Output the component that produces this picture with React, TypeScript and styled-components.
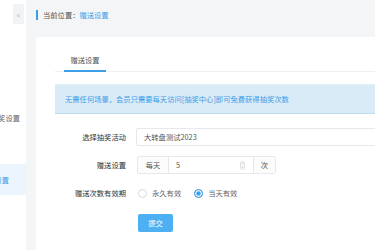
import React, { useState } from 'react';
import styled, { createGlobalStyle } from 'styled-components';

const GlobalStyle = createGlobalStyle`
  html, body {
    margin: 0;
    padding: 0;
    background: #f4f5f7;
    font-family: "Noto Sans CJK SC", "Noto Sans", sans-serif;
    font-size: 7.3px;
    color: #555;
  }
  * { box-sizing: border-box; }
`;

const menuItems = [
  { label: '转盘抽奖设置', top: 102, right: 6, active: false },
  { label: '签到设置', top: 0, right: 27, active: false },
  { label: '赠送设置', top: 0, right: 17, active: true },
];

const SpinnerIcon = () => (
  <svg width="5" height="9" viewBox="0 0 5 9">
    <rect x="0.5" y="0.5" width="4" height="8" rx="2" fill="none" stroke="#c9ccd1" strokeWidth="0.6" />
    <path d="M1.5 3.4 L2.5 2.3 L3.5 3.4 M1.5 5.6 L2.5 6.7 L3.5 5.6" fill="none" stroke="#9aa0a6" strokeWidth="0.6" />
  </svg>
);

export default function App() {
  const [validity, setValidity] = useState('today');
  const [count, setCount] = useState('5');

  return (
    <>
      <GlobalStyle />
      <Layout>
        <Sidebar>
          <CollapseButton>«</CollapseButton>
          {menuItems.map((item, i) => (
            <MenuItem key={i} $active={item.active} $top={item.top} $right={item.right}>
              <span>{item.label}</span>
            </MenuItem>
          ))}
        </Sidebar>

        <Main>
          <Breadcrumb>
            <BreadcrumbBar />
            <span>当前位置：</span>
            <BreadcrumbLink>赠送设置</BreadcrumbLink>
          </Breadcrumb>

          <Card>
            <Tabs>
              <Tab $active>赠送设置</Tab>
            </Tabs>

            <Alert>无需任何场景，会员只需要每天访问[抽奖中心]即可免费获得抽奖次数</Alert>

            <Form>
              <Row $gap={10}>
                <Label>选择抽奖活动</Label>
                <TextInput value="大转盘测试2023" readOnly />
              </Row>

              <Row $gap={10}>
                <Label>赠送设置</Label>
                <InputGroup>
                  <Addon $width={31}>每天</Addon>
                  <NumberBox>
                    <NumberField value={count} onChange={(e) => setCount(e.target.value)} />
                    <SpinnerIcon />
                  </NumberBox>
                  <Addon $width={22} $last>次</Addon>
                </InputGroup>
              </Row>

              <Row $gap={12}>
                <Label>赠送次数有效期</Label>
                <RadioGroup>
                  <RadioOption onClick={() => setValidity('forever')}>
                    <RadioCircle $checked={validity === 'forever'} />
                    <span>永久有效</span>
                  </RadioOption>
                  <RadioOption onClick={() => setValidity('today')}>
                    <RadioCircle $checked={validity === 'today'} />
                    <span>当天有效</span>
                  </RadioOption>
                </RadioGroup>
              </Row>

              <Row $gap={0}>
                <Label />
                <SubmitButton>提交</SubmitButton>
              </Row>
            </Form>
          </Card>
        </Main>
      </Layout>
    </>
  );
}

const Layout = styled.div`
  display: flex;
  height: 250px;
  overflow: hidden;
`;

const Sidebar = styled.div`
  position: relative;
  width: 26px;
  flex-shrink: 0;
  background: #fff;
  overflow: hidden;
`;

const CollapseButton = styled.div`
  position: absolute;
  top: 4px;
  right: 2px;
  width: 11px;
  height: 20px;
  background: #f2f3f5;
  color: #b5b9bf;
  font-size: 8px;
  display: flex;
  align-items: center;
  justify-content: center;
`;

const MenuItem = styled.div<{ $active: boolean; $top: number; $right: number }>`
  display: flex;
  justify-content: flex-end;
  align-items: center;
  height: 31px;
  margin-top: ${(p) => p.$top}px;
  padding-right: ${(p) => p.$right}px;
  white-space: nowrap;
  overflow: hidden;
  background: ${(p) => (p.$active ? '#ecf5fd' : 'transparent')};
  color: ${(p) => (p.$active ? '#3d9ee8' : '#666')};

  span {
    flex-shrink: 0;
  }
`;

const Main = styled.div`
  flex: 1;
  display: flex;
  flex-direction: column;
  padding-left: 10px;
  min-width: 0;
`;

const Breadcrumb = styled.div`
  height: 37px;
  display: flex;
  align-items: center;
  padding-bottom: 7px;
  color: #555;
`;

const BreadcrumbBar = styled.div`
  width: 1.5px;
  height: 10px;
  background: #3d9ee8;
  margin-right: 5.5px;
`;

const BreadcrumbLink = styled.span`
  color: #3d9ee8;
`;

const Card = styled.div`
  flex: 1;
  background: #fff;
  padding: 13px 0 0 19px;
  width: 360px;
`;

const Tabs = styled.div`
  display: flex;
  height: 22px;
  border-bottom: 1px solid #eeeff1;
  padding-left: 9px;
`;

const Tab = styled.div<{ $active?: boolean }>`
  width: 42px;
  display: flex;
  align-items: center;
  justify-content: center;
  color: #555;
  border-bottom: 2px solid ${(p) => (p.$active ? '#3d9ee8' : 'transparent')};
  margin-bottom: -1px;
`;

const Alert = styled.div`
  margin-top: 12px;
  height: 30px;
  display: flex;
  align-items: center;
  padding-left: 10px;
  background: #d9ebf6;
  border-bottom: 1px solid #bcdcef;
  border-top: 1px solid #e0eef7;
  color: #3d9ee8;
  white-space: nowrap;
`;

const Form = styled.div`
  margin-top: 14px;
  display: flex;
  flex-direction: column;
`;

const Row = styled.div<{ $gap: number }>`
  display: flex;
  align-items: center;
  height: 18px;
  margin-bottom: ${(p) => p.$gap}px;
`;

const Label = styled.div`
  width: 71px;
  text-align: right;
  margin-right: 11px;
  color: #333;
  white-space: nowrap;
`;

const TextInput = styled.input`
  width: 260px;
  height: 18px;
  border: 1px solid #e6e8eb;
  border-radius: 2px;
  padding: 0 7px;
  font: inherit;
  color: #555;
  outline: none;
  margin-left: -1px;
`;

const InputGroup = styled.div`
  display: flex;
  height: 18px;
  border: 1px solid #e6e8eb;
  border-radius: 2px;
`;

const Addon = styled.div<{ $width: number; $last?: boolean }>`
  width: ${(p) => p.$width}px;
  display: flex;
  align-items: center;
  justify-content: center;
  color: #555;
  background: #fcfcfc;
  border-left: ${(p) => (p.$last ? '1px solid #e6e8eb' : 'none')};
  border-right: ${(p) => (p.$last ? 'none' : '1px solid #e6e8eb')};
`;

const NumberBox = styled.div`
  width: 84px;
  display: flex;
  align-items: center;
  padding: 0 8px 0 7px;
`;

const NumberField = styled.input`
  flex: 1;
  min-width: 0;
  border: none;
  outline: none;
  font: inherit;
  color: #555;
  padding: 0;
  background: transparent;
`;

const RadioGroup = styled.div`
  display: flex;
  align-items: center;
  gap: 12px;
`;

const RadioOption = styled.label`
  display: flex;
  align-items: center;
  gap: 5px;
  color: #666;
  cursor: pointer;
`;

const RadioCircle = styled.span<{ $checked: boolean }>`
  width: 9px;
  height: 9px;
  border-radius: 50%;
  border: 1px solid ${(p) => (p.$checked ? '#3d9ee8' : '#d5d8dc')};
  background: ${(p) => (p.$checked ? '#3d9ee8' : '#fff')};
  box-shadow: ${(p) => (p.$checked ? 'inset 0 0 0 1.2px #fff' : 'none')};
  margin-left: 1px;
`;

const SubmitButton = styled.button`
  width: 35px;
  height: 18px;
  border: none;
  border-radius: 2px;
  background: #4cb0f3;
  color: #fff;
  font: inherit;
  padding: 0;
  margin-left: 1px;
`;
